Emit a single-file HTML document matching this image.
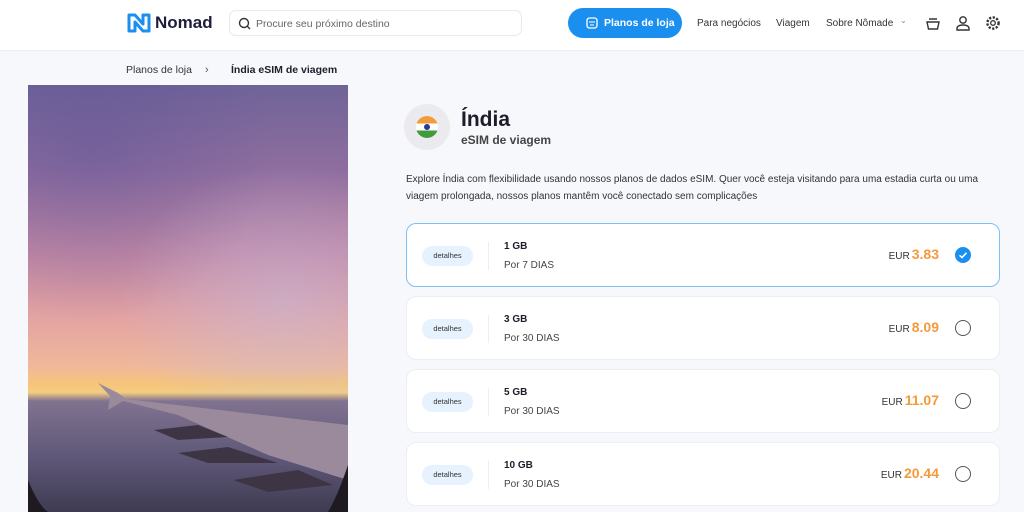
<!DOCTYPE html>
<html><head><meta charset="utf-8"><style>
*{box-sizing:border-box;margin:0;padding:0}
body{width:1024px;height:512px;overflow:hidden;background:#f7f8fb;font-family:"Liberation Sans",sans-serif;color:#1d1d2b;position:relative}
.hdr{position:absolute;left:0;top:0;width:1024px;height:51px;background:#fff;border-bottom:1px solid #ececf2}
.abs{position:absolute}
.search{left:229px;top:10px;width:293px;height:26px;border:1px solid #e8e8ef;border-radius:7px;background:#fff}
.search span{position:absolute;left:26px;top:7px;font-size:10.5px;color:#666}
.btn{left:568px;top:8px;width:114px;height:30px;border-radius:15px;background:#1a8ff0;color:#fff;font-size:10.5px;font-weight:bold}
.nav{font-size:10px;color:#333;top:18px;white-space:nowrap}
.card{position:absolute;left:406px;width:594px;height:64px;background:#fff;border-radius:10px;border:1px solid #eceef3}
.card.sel{border:1.5px solid #7cc0f4}
.det{position:absolute;left:15px;top:22px;width:51px;height:20px;border-radius:10px;background:#e6f2fd;font-size:7.5px;text-align:center;line-height:20px;color:#333}
.sep{position:absolute;left:81px;top:18px;width:1px;height:28px;background:#eee}
.gb{position:absolute;left:97px;top:17px;font-size:10px;font-weight:bold}
.days{position:absolute;left:97px;top:36px;font-size:10px;color:#444}
.pr{position:absolute;right:60px;top:22px;font-size:10px;color:#333}
.pr b{font-size:14px;color:#f59a3a;font-weight:bold;margin-left:2px}
.rad{position:absolute;left:548px;top:23px;width:16px;height:16px;border-radius:50%;border:1.5px solid #555}
</style></head><body>
<div class="hdr">
<svg class="abs" style="left:126px;top:12px" width="26" height="22" viewBox="0 0 26 22"><path d="M3 3 L3 19 L9 19 L9 10 L17 19 L23 19 L23 3 L17 3 L17 12 L9 3 Z" fill="none" stroke="#1a8ff0" stroke-width="3" stroke-linejoin="round"/></svg>
<div class="abs" style="left:155px;top:13px;font-size:17px;font-weight:bold;color:#1d1d3b">Nomad</div>
<div class="abs search"><svg class="abs" style="left:8px;top:6px" width="13" height="13"><circle cx="6" cy="6" r="4.5" fill="none" stroke="#333" stroke-width="1.4"/><path d="M9.3 9.3 L12 12" stroke="#333" stroke-width="1.4"/></svg><span>Procure seu próximo destino</span></div>
<div class="abs btn"><svg class="abs" style="left:18px;top:9px" width="12" height="12"><rect x="1" y="1" width="10" height="10" rx="2.5" fill="none" stroke="#fff" stroke-width="1.3"/><path d="M3 5h6M4 8h4" stroke="#fff"/></svg><span class="abs" style="left:36px;top:9px;white-space:nowrap">Planos de loja</span></div>
<div class="abs nav" style="left:697px">Para negócios</div>
<div class="abs nav" style="left:776px">Viagem</div>
<div class="abs nav" style="left:826px">Sobre Nômade</div>
<div class="abs" style="left:900px;top:16px;font-size:8px;color:#888">⌄</div>
<svg class="abs" style="left:925px;top:15px" width="16" height="16"><path d="M2 7h12l-1.5 7h-9z M4 4h8" fill="none" stroke="#333" stroke-width="1.4"/></svg>
<svg class="abs" style="left:955px;top:15px" width="16" height="16"><circle cx="8" cy="5" r="3.2" fill="none" stroke="#333" stroke-width="1.4"/><path d="M2 15v-1.5c0-2 2-3.5 6-3.5s6 1.5 6 3.5V15z" fill="none" stroke="#333" stroke-width="1.4"/></svg>
<svg class="abs" style="left:985px;top:15px" width="16" height="16"><circle cx="8" cy="8" r="2.3" fill="none" stroke="#333" stroke-width="1.3"/><circle cx="8" cy="8" r="5.6" fill="none" stroke="#333" stroke-width="2.4" stroke-dasharray="2.2 1.5"/></svg>
</div>
<div class="abs" style="left:126px;top:64px;font-size:10.5px;color:#333">Planos de loja</div>
<div class="abs" style="left:205px;top:64px;font-size:11px;color:#555">›</div>
<div class="abs" style="left:231px;top:64px;font-size:10.5px;font-weight:bold">Índia eSIM de viagem</div>
<div class="abs" style="left:28px;top:85px;width:320px;height:427px;overflow:hidden;background:linear-gradient(180deg,#6f6398 0%,#8f6e9f 20%,#c58aa5 40%,#e4a4a2 55%,#f0b89a 66%,#f7c47a 70%,#f4cd80 72%,#807390 74%,#5d5676 88%,#3f3b52 100%)">
<div class="abs" style="left:0;top:0;width:320px;height:310px;background:radial-gradient(ellipse at 80% 70%,rgba(190,190,230,.45),transparent 45%),radial-gradient(ellipse at 20% 20%,rgba(90,80,150,.4),transparent 50%)"></div>
<svg class="abs" style="left:0;top:0" width="320" height="427"><path d="M70 298 L90 308 L98 314 L320 340 L320 395 L240 370 L150 330 L95 316 L80 325 L82 311 Z" fill="#9a8a9c"/><path d="M126 345 L170 340 L200 352 L150 355 Z M150 368 L200 362 L250 378 L180 378 Z M205 395 L270 385 L305 400 L240 407 Z" fill="#3e3544"/><path d="M0 395 Q10 420 20 427 L0 427Z M320 380 Q310 410 300 427 L320 427Z" fill="#1f1a22"/></svg>
</div>
<div class="abs" style="left:404px;top:104px;width:46px;height:46px;border-radius:50%;background:#ebebef"></div>
<div class="abs" style="left:416px;top:116px;width:22px;height:22px;border-radius:50%;overflow:hidden;background:linear-gradient(#f39b3a 0 33%,#fff 33% 67%,#3f9b3c 67%)"><div class="abs" style="left:8px;top:8px;width:6px;height:6px;border-radius:50%;background:#2a3a9a"></div></div>
<div class="abs" style="left:461px;top:108px;font-size:21px;font-weight:bold">Índia</div>
<div class="abs" style="left:461px;top:133px;font-size:12px;font-weight:bold;color:#444">eSIM de viagem</div>
<div class="abs" style="left:406px;top:171px;width:594px;font-size:10px;line-height:17px;color:#333">Explore Índia com flexibilidade usando nossos planos de dados eSIM. Quer você esteja visitando para uma estadia curta ou uma viagem prolongada, nossos planos mantêm você conectado sem complicações</div>
<div class="card sel" style="top:223px"><div class="det">detalhes</div><div class="sep"></div><div class="gb">1 GB</div><div class="days">Por 7 DIAS</div><div class="pr">EUR<b>3.83</b></div><div class="rad" style="border:none;background:#1a8ff0"><svg width="16" height="16"><path d="M4.5 8.3 L7 10.5 L11.5 5.8" fill="none" stroke="#fff" stroke-width="1.6"/></svg></div></div>
<div class="card" style="top:296px"><div class="det">detalhes</div><div class="sep"></div><div class="gb">3 GB</div><div class="days">Por 30 DIAS</div><div class="pr">EUR<b>8.09</b></div><div class="rad"></div></div>
<div class="card" style="top:369px"><div class="det">detalhes</div><div class="sep"></div><div class="gb">5 GB</div><div class="days">Por 30 DIAS</div><div class="pr">EUR<b>11.07</b></div><div class="rad"></div></div>
<div class="card" style="top:442px"><div class="det">detalhes</div><div class="sep"></div><div class="gb">10 GB</div><div class="days">Por 30 DIAS</div><div class="pr">EUR<b>20.44</b></div><div class="rad"></div></div>
</body></html>
